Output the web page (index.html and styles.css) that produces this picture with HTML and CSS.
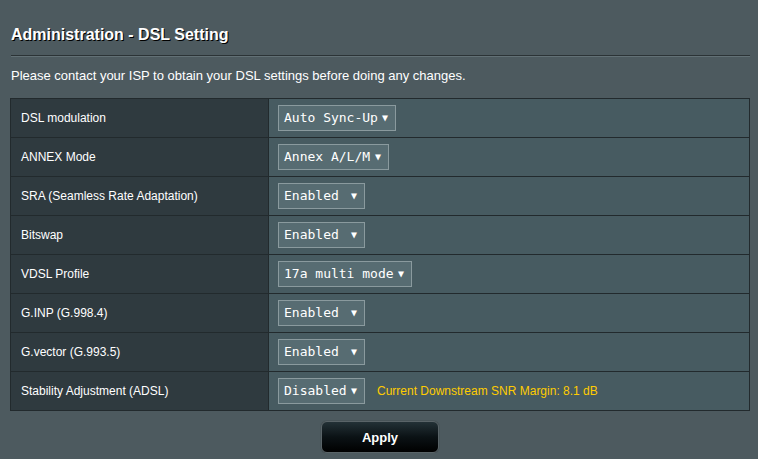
FILE: index.html
```
<!DOCTYPE HTML>
<html lang="en">
<head>
	<meta charset="utf-8">
	<link rel="stylesheet" href="styles.css">
</head>
<body>
	<div class="page">
		<div class="formtitle">Administration - DSL Setting</div>
		<div class="splitline"></div>
		<div class="desc">Please contact your ISP to obtain your DSL settings before doing any changes.</div>
		<div class="formtable">
			<div class="row">
				<div class="th">DSL modulation</div>
				<div class="td"><span class="select w118">Auto Sync-Up<i>&#9660;</i></span></div>
			</div>
			<div class="row">
				<div class="th">ANNEX Mode</div>
				<div class="td"><span class="select w111">Annex A/L/M<i>&#9660;</i></span></div>
			</div>
			<div class="row">
				<div class="th">SRA (Seamless Rate Adaptation)</div>
				<div class="td"><span class="select w87">Enabled<i>&#9660;</i></span></div>
			</div>
			<div class="row">
				<div class="th">Bitswap</div>
				<div class="td"><span class="select w87">Enabled<i>&#9660;</i></span></div>
			</div>
			<div class="row">
				<div class="th">VDSL Profile</div>
				<div class="td"><span class="select w134">17a multi mode<i>&#9660;</i></span></div>
			</div>
			<div class="row">
				<div class="th">G.INP (G.998.4)</div>
				<div class="td"><span class="select w87">Enabled<i>&#9660;</i></span></div>
			</div>
			<div class="row">
				<div class="th">G.vector (G.993.5)</div>
				<div class="td"><span class="select w87">Enabled<i>&#9660;</i></span></div>
			</div>
			<div class="row">
				<div class="th">Stability Adjustment (ADSL)</div>
				<div class="td"><span class="select w87">Disabled<i>&#9660;</i></span><span class="hint">Current Downstream SNR Margin: 8.1 dB</span></div>
			</div>
		</div>
		<div class="apply">
			<a href="javascript:;" class="button_gen">Apply</a>
		</div>
	</div>
</body>
</html>
```

FILE: styles.css
```
*{padding:0;margin:0;text-decoration:none;box-sizing:border-box;}
html,body{background:#4d5a5f;}
body{font-family:"Liberation Sans",Arial,sans-serif;color:#fff;}
.page{width:758px;padding:0 8px 0 10px;}
.formtitle{margin-top:25px;padding-left:1px;font-size:16px;line-height:20px;font-weight:bold;text-shadow:1px 1px 0 #000;}
.splitline{margin:10px 0 0 1px;height:2px;border-top:1px solid #2b3336;border-bottom:1px solid #627075;}
.desc{margin-top:11px;padding-left:1px;font-size:13px;line-height:16px;}
.formtable{margin-top:14px;width:740px;border:1px solid #222a2d;}
.row{display:flex;height:39px;border-bottom:1px solid #222a2d;}
.row:last-child{height:38px;border-bottom:none;}
.th{width:258px;flex:none;display:flex;align-items:center;padding:0 0 1px 10px;background:#2f3a3f;border-right:1px solid #222a2d;font-size:12px;}
.td{flex:1;display:flex;align-items:center;padding-left:9px;background:#475b61;}
.select{display:flex;align-items:center;justify-content:space-between;height:26px;padding:0 7px 1px 5px;background:#576c72;border:1px solid #8a9a9e;font-family:"DejaVu Sans Mono",monospace;font-size:13px;color:#fff;}
.select i{font-style:normal;font-size:10px;margin-left:4px;}
.w87{width:87px;}
.w111{width:111px;}
.w118{width:118px;}
.w134{width:134px;}
.hint{margin-left:12px;font-size:12px;color:#ffcc00;}
.apply{display:flex;justify-content:center;margin-top:10px;}
.button_gen{display:block;width:118px;height:32px;line-height:31px;text-align:center;color:#fff;font-size:13px;font-weight:bold;border:1px solid #5a6468;border-radius:6px;background:linear-gradient(to bottom,#233136 0%,#0b1215 50%,#000 100%);box-shadow:0 0 1px #222;}
```
